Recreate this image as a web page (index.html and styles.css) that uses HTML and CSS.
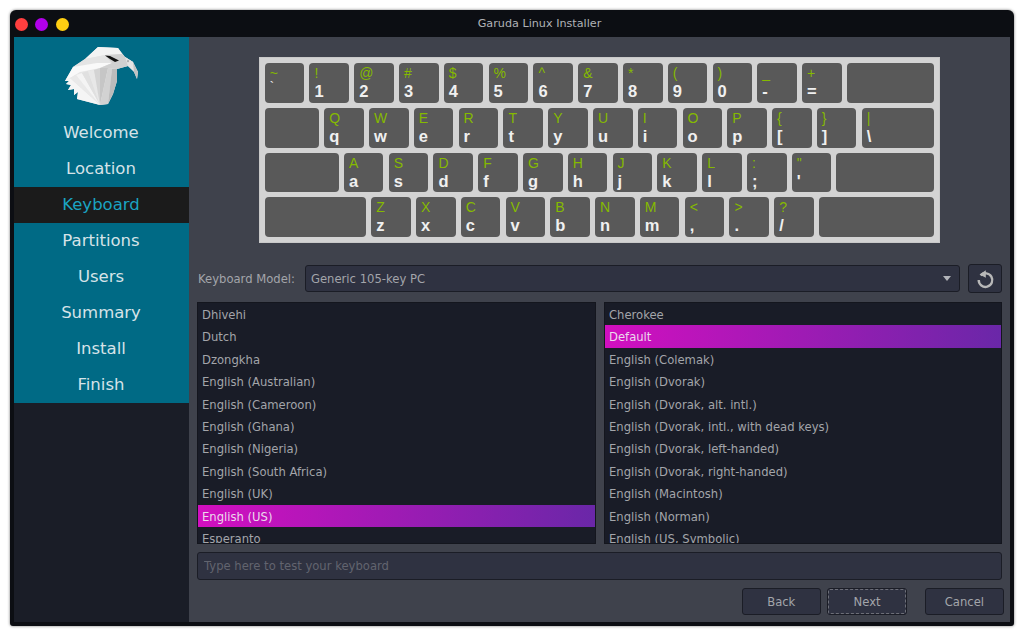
FILE: index.html
```html
<!DOCTYPE html>
<html lang="en">
<head>
<meta charset="utf-8">
<title>Garuda Linux Installer</title>
<link rel="stylesheet" href="styles.css">
</head>
<body>
<div class="window">
  <header class="titlebar">
    <div class="lights"><span class="light red"></span><span class="light purple"></span><span class="light yellow"></span></div>
    <div class="title">Garuda Linux Installer</div>
  </header>
  <div class="main">
    <aside class="sidebar">
      <div class="steps">
        <div class="logo">
          <svg width="90" height="78" viewBox="55 37 90 78">
            <polygon fill="#e6e6e6" points="98,47 118,48 125,57 133,62 138,72 137,79 134,72 128,66 117,69 117,81 113,94 108,104 100,105 77,99 78,92 74,95 74,89 68,90 71,85 66,84 69,81 65,81 73,67 85,59"/>
            <polygon fill="#f3f3f3" points="98,47 118,48 122,54 105,55 85,59"/>
            <polygon fill="#e4e4e4" points="85,59 105,55 112,63 97,63 73,67"/>
            <polygon fill="#f9f9f9" points="73,67 97,63 112,63 100,68 80,72 65,81"/>
            <polygon fill="#d0d0d0" points="105,55 122,54 125,57 133,62 128,66 117,69 100,68 112,63"/>
            <polygon fill="#e4e4e4" points="125,57 133,62 135,72 128,66"/>
            <polygon fill="#c2c2c2" points="133,62 138,72 137,79 134,72"/>
            <polygon fill="#f5f5f5" points="65,81 70,78 100,105 77,99 78,92 74,95 74,89 68,90 71,85 66,84 69,81"/>
            <polygon fill="#e9e9e9" points="70,78 76,75 100,105"/>
            <polygon fill="#f4f4f4" points="76,75 82,73 100,105"/>
            <polygon fill="#e0e0e0" points="82,73 88,71 100,105"/>
            <polygon fill="#e8e8e8" points="88,71 94,70 100,105"/>
            <polygon fill="#d4d4d4" points="94,70 100,68 100,105"/>
            <polygon fill="#c6c6c6" points="100,68 108,68 100,105"/>
            <polygon fill="#d2d2d2" points="108,68 112,69 108,104 100,105"/>
            <polygon fill="#bcbcbc" points="112,69 117,69 117,81 113,94 108,104"/>
            <polygon fill="#111" points="105,55.5 110,56 119,60.5 115,62 110,59"/>
            <polygon fill="#7d7d7d" points="127,60.5 129,60.5 128,62.5"/>
          </svg>
        </div>
        <div class="step">Welcome</div>
        <div class="step">Location</div>
        <div class="step active">Keyboard</div>
        <div class="step">Partitions</div>
        <div class="step">Users</div>
        <div class="step">Summary</div>
        <div class="step">Install</div>
        <div class="step">Finish</div>
      </div>
    </aside>
    <main class="content">
      <div class="kbd-wrap">
        <div class="kbd">
          <div class="row">
            <div class="key"><span class="up">~</span><span class="lo small">`</span></div>
            <div class="key"><span class="up">!</span><span class="lo">1</span></div>
            <div class="key"><span class="up">@</span><span class="lo">2</span></div>
            <div class="key"><span class="up">#</span><span class="lo">3</span></div>
            <div class="key"><span class="up">$</span><span class="lo">4</span></div>
            <div class="key"><span class="up">%</span><span class="lo">5</span></div>
            <div class="key"><span class="up">^</span><span class="lo">6</span></div>
            <div class="key"><span class="up">&amp;</span><span class="lo">7</span></div>
            <div class="key"><span class="up">*</span><span class="lo">8</span></div>
            <div class="key"><span class="up">(</span><span class="lo">9</span></div>
            <div class="key"><span class="up">)</span><span class="lo">0</span></div>
            <div class="key"><span class="up">_</span><span class="lo">-</span></div>
            <div class="key"><span class="up">+</span><span class="lo">=</span></div>
            <div class="key grow"></div>
          </div>
          <div class="row">
            <div class="key w-tab"></div>
            <div class="key"><span class="up">Q</span><span class="lo">q</span></div>
            <div class="key"><span class="up">W</span><span class="lo">w</span></div>
            <div class="key"><span class="up">E</span><span class="lo">e</span></div>
            <div class="key"><span class="up">R</span><span class="lo">r</span></div>
            <div class="key"><span class="up">T</span><span class="lo">t</span></div>
            <div class="key"><span class="up">Y</span><span class="lo">y</span></div>
            <div class="key"><span class="up">U</span><span class="lo">u</span></div>
            <div class="key"><span class="up">I</span><span class="lo">i</span></div>
            <div class="key"><span class="up">O</span><span class="lo">o</span></div>
            <div class="key"><span class="up">P</span><span class="lo">p</span></div>
            <div class="key"><span class="up">{</span><span class="lo">[</span></div>
            <div class="key"><span class="up">}</span><span class="lo">]</span></div>
            <div class="key grow"><span class="up">|</span><span class="lo">\</span></div>
          </div>
          <div class="row">
            <div class="key w-caps"></div>
            <div class="key"><span class="up">A</span><span class="lo">a</span></div>
            <div class="key"><span class="up">S</span><span class="lo">s</span></div>
            <div class="key"><span class="up">D</span><span class="lo">d</span></div>
            <div class="key"><span class="up">F</span><span class="lo">f</span></div>
            <div class="key"><span class="up">G</span><span class="lo">g</span></div>
            <div class="key"><span class="up">H</span><span class="lo">h</span></div>
            <div class="key"><span class="up">J</span><span class="lo">j</span></div>
            <div class="key"><span class="up">K</span><span class="lo">k</span></div>
            <div class="key"><span class="up">L</span><span class="lo">l</span></div>
            <div class="key"><span class="up">:</span><span class="lo">;</span></div>
            <div class="key"><span class="up">"</span><span class="lo">'</span></div>
            <div class="key grow"></div>
          </div>
          <div class="row">
            <div class="key w-shift"></div>
            <div class="key"><span class="up">Z</span><span class="lo">z</span></div>
            <div class="key"><span class="up">X</span><span class="lo">x</span></div>
            <div class="key"><span class="up">C</span><span class="lo">c</span></div>
            <div class="key"><span class="up">V</span><span class="lo">v</span></div>
            <div class="key"><span class="up">B</span><span class="lo">b</span></div>
            <div class="key"><span class="up">N</span><span class="lo">n</span></div>
            <div class="key"><span class="up">M</span><span class="lo">m</span></div>
            <div class="key"><span class="up">&lt;</span><span class="lo">,</span></div>
            <div class="key"><span class="up">&gt;</span><span class="lo">.</span></div>
            <div class="key"><span class="up">?</span><span class="lo">/</span></div>
            <div class="key grow"></div>
          </div>
        </div>
      </div>
      <div class="model-row">
        <label class="model-label">Keyboard Model:</label>
        <div class="combo"><span>Generic 105-key PC</span><span class="arrow"></span></div>
        <button class="reset" aria-label="Reset">
          <svg width="20" height="20" viewBox="0 0 20 20"><path d="M5.6 6.4a6.8 6.8 0 1 1-1.9 4.7" fill="none" stroke="#b8b8b8" stroke-width="2.4"/><polygon points="10.8,1.2 10.8,8.8 4.6,5.6" fill="#b8b8b8"/></svg>
        </button>
      </div>
      <div class="lists">
        <div class="list">
          <div class="item">Dhivehi</div>
          <div class="item">Dutch</div>
          <div class="item">Dzongkha</div>
          <div class="item">English (Australian)</div>
          <div class="item">English (Cameroon)</div>
          <div class="item">English (Ghana)</div>
          <div class="item">English (Nigeria)</div>
          <div class="item">English (South Africa)</div>
          <div class="item">English (UK)</div>
          <div class="item selected">English (US)</div>
          <div class="item">Esperanto</div>
        </div>
        <div class="list">
          <div class="item">Cherokee</div>
          <div class="item selected">Default</div>
          <div class="item">English (Colemak)</div>
          <div class="item">English (Dvorak)</div>
          <div class="item">English (Dvorak, alt. intl.)</div>
          <div class="item">English (Dvorak, intl., with dead keys)</div>
          <div class="item">English (Dvorak, left-handed)</div>
          <div class="item">English (Dvorak, right-handed)</div>
          <div class="item">English (Macintosh)</div>
          <div class="item">English (Norman)</div>
          <div class="item">English (US, Symbolic)</div>
        </div>
      </div>
      <input class="test" type="text" placeholder="Type here to test your keyboard">
      <div class="actions">
        <button class="btn">Back</button>
        <button class="btn focus">Next</button>
        <button class="btn cancel">Cancel</button>
      </div>
    </main>
  </div>
</div>
</body>
</html>
```
FILE: styles.css
```css
* { box-sizing: border-box; }
html, body { margin: 0; height: 100%; background: #fff; overflow: hidden; }
body { padding: 10px; font-family: "DejaVu Sans", sans-serif; font-size: 11.6px; color: #a3a5aa; }
.window {
  width: 1004px; height: 615.5px; background: #0c0e13; border-radius: 6px 6px 3px 3px;
  box-shadow: 0 0 3px rgba(0,0,0,.55); padding: 0 4px 4px; display: flex; flex-direction: column;
}
.titlebar { height: 27px; flex: none; position: relative; display: flex; align-items: center; justify-content: center; }
.lights { position: absolute; left: 1px; top: 7.5px; display: flex; gap: 7.3px; }
.light { width: 13px; height: 13px; border-radius: 50%; display: block; }
.red { background: #ff3f3f; }
.purple { background: #b100ec; }
.yellow { background: #ffcf12; }
.title { color: #b0b2b6; font-size: 11.2px; margin-left: 55px; }
.main { flex: 1; display: flex; min-height: 0; }
.sidebar { width: 175px; flex: none; background: #1a1d27; }
.steps { background: #006a85; }
.logo { height: 78px; display: flex; justify-content: flex-start; padding-left: 41px; }
.step { height: 36px; display: flex; align-items: center; justify-content: center; color: #d6e3e8; font-size: 16.5px; padding: 0 1px 2px 0; }
.step.active { background: #1b1b1b; color: #1aa3c2; }
.content { flex: 1; min-width: 0; background: #3f424c; padding: 20px 8px 0 8px; display: flex; flex-direction: column; }
.kbd-wrap { height: 186px; flex: none; margin-left: 62px; }
.kbd { width: 681px; height: 186px; background: #d3d3d3; padding: 5.3px 4.7px; display: flex; flex-direction: column; gap: 5px; border: 1px solid #c9c9c9; }
.row { display: flex; gap: 5.2px; flex: 1; }
.key { width: 39.6px; flex: none; background: #595959; border-radius: 4px; display: flex; flex-direction: column; padding: 1px 0 0 5px; font-family: "Liberation Sans", sans-serif; }
.key.grow { flex: 1; }
.w-tab { width: 54.4px; }
.w-caps { width: 74px; }
.w-shift { width: 101.3px; }
.up { color: #85ba00; font-size: 14px; line-height: 18px; height: 18px; }
.lo { color: #f0f0f0; font-size: 16.5px; font-weight: 700; line-height: 19px; }
.lo.small { font-size: 13px; font-weight: 400; line-height: 10px; }
.model-row { display: flex; align-items: center; margin-top: 21px; height: 29px; flex: none; }
.model-label { width: 107px; flex: none; margin-left: 1px; }
.combo { width: 655px; height: 27px; background: #2f3241; border: 1px solid #1b1d26; border-radius: 3px; display: flex; align-items: center; justify-content: space-between; padding: 0 8px 0 5px; }
.arrow { width: 0; height: 0; border-left: 4px solid transparent; border-right: 4px solid transparent; border-top: 5px solid #b2b4b9; }
.reset { width: 34px; height: 29px; margin-left: 8px; background: #2f3241; border: 1px solid #1b1d26; border-radius: 3px; padding: 0; display: flex; align-items: center; justify-content: center; }
.lists { display: flex; gap: 8px; margin-top: 9px; height: 241.5px; flex: none; }
.list { width: 399px; background: #191c27; border: 1px solid #14161e; overflow: hidden; flex: none; }
.list + .list { width: 398px; }
.item { height: 22.4px; line-height: 22px; padding: 1px 0 0 4px; white-space: nowrap; }
.item.selected { background: linear-gradient(90deg, #d20fc0 0%, #6a27a8 100%); color: #ecd9ec; }
.test { width: 805px; height: 27.5px; flex: none; margin-top: 8.5px; background: #2f3241; border: 1px solid #1b1d26; border-radius: 3px; padding: 1px 6px 0; font: 11.6px "DejaVu Sans", sans-serif; color: #a3a5aa; outline: none; }
.test::placeholder { color: #62646f; opacity: 1; }
.actions { display: flex; justify-content: flex-end; margin-top: 8.5px; gap: 6.5px; }
.btn { width: 79.3px; height: 27px; background: #2f3241; border: 1px solid #1b1d26; border-radius: 3px; color: #a3a5aa; font: 11.6px "DejaVu Sans", sans-serif; padding: 0; margin: 0; }
.btn.focus { outline: 1px dashed #6d6f78; outline-offset: -2px; }
.btn.cancel { margin-left: 11.5px; margin-right: -2px; }
```
